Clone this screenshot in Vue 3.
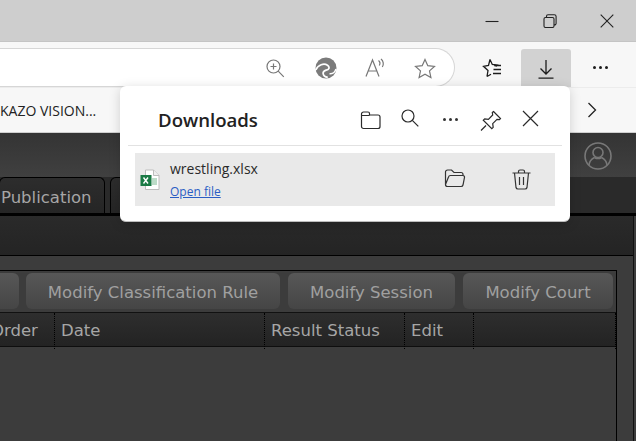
<template>
  <div class="screen">
    <!-- window title bar -->
    <div class="titlebar">
      <svg class="win-icon" width="14" height="14" viewBox="0 0 14 14"><path d="M0.5 7.5h13" /></svg>
      <svg class="win-icon restore" width="14" height="14" viewBox="0 0 14 14"><path d="M1 5a1.500 1.500 0 0 1 1.500-1.500h7A1.500 1.500 0 0 1 11 5v7a1.500 1.500 0 0 1-1.500 1.500h-7A1.500 1.500 0 0 1 1 12zM3.500 3.500V2.200A1.500 1.500 0 0 1 5 .7h6.300a1.800 1.800 0 0 1 1.800 1.800v7a1.500 1.500 0 0 1-1.600 1.400" /></svg>
      <svg class="win-icon" width="14" height="14" viewBox="0 0 14 14"><path d="M.7.7l12.600 12.600M13.300.7L.7 13.300" /></svg>
    </div>

    <!-- address bar row -->
    <div class="toolbar">
      <div class="address">
        <svg class="addr-icon zoom" width="20" height="20" viewBox="0 0 20 20"><circle cx="8.500" cy="8.500" r="6.500" /><path d="M8.500 5.500v6M5.500 8.500h6M13.200 13.200l5.600 5.600" /></svg>
        <svg class="edge" width="22" height="22" viewBox="0 0 22 22"><circle cx="11" cy="11" r="10.500" fill="#7b7b7b" /><path d="M0.800 13C3 7.500 9 6 12.500 8.200c1.800 1.200 2 3 .8 4-2 1.400-5.500 1-5.200 4.200 .2 2 2 3.600 4.700 4" fill="none" stroke="#fff" stroke-width="1.700" /><path d="M21 12c-1 3.500-4 5-6.500 4.700" fill="none" stroke="#fff" stroke-width="1.500" /></svg>
        <svg class="addr-icon" width="22" height="20" viewBox="0 0 22 20"><path d="M1 18.500L7.500 2l6.500 16.500M3.200 13h8.600M13.500 2.500c1.500 1.200 1.800 3.200.8 5M16 1c2.500 2 3 5.500 1.300 8" /></svg>
        <svg class="addr-icon star" width="22" height="21" viewBox="0 0 22 21"><path d="M11 1.500l2.800 6.200 6.700.7-5 4.500 1.400 6.600L11 16.200l-5.900 3.300 1.400-6.600-5-4.500 6.700-.7z" /></svg>
      </div>
      <svg class="tool-icon fav" width="22" height="20" viewBox="0 0 22 20"><path d="M10 1.500l2.300 5 5 .6-1.600 1.500M7 18.500l1-6-4.500-4.200 5-.9L10 1.500M7 18.500l4-2.300M14 7.500h7M13.500 11.500h7.500M13 15.500h8" /></svg>
      <div class="download-btn">
        <svg class="tool-icon" width="16" height="20" viewBox="0 0 16 20"><path d="M8 1v14M2.500 9.500L8 15l5.500-5.500M.5 19.200h15" /></svg>
      </div>
      <div class="more"><i></i><i></i><i></i></div>
    </div>

    <!-- favorites bar -->
    <div class="favbar">
      <span class="fav-item">KAZO VISION...</span>
      <svg class="chevron" width="10" height="16" viewBox="0 0 10 16"><path d="M1.500 1l7 7-7 7" /></svg>
    </div>

    <!-- page -->
    <div class="page">
      <div class="page-header">
        <svg class="avatar" width="28" height="28" viewBox="0 0 28 28"><circle cx="14" cy="14" r="13" /><circle cx="14" cy="10.500" r="5" /><path d="M5 23c.5-5 3.500-6.500 5.500-7.500M23 23c-.5-5-3.500-6.500-5.500-7.500M10.500 15.500c2 1.200 5 1.200 7 0" /></svg>
      </div>
      <div class="tabs">
        <div class="tab first">Publication</div>
        <div class="tab rest"></div>
      </div>
      <div class="tab-body">
        <div class="panel">
          <div class="panel-inner">
            <div class="actions">
              <button class="btn stub"></button>
              <button class="btn w-rule">Modify Classification Rule</button>
              <button class="btn w-session">Modify Session</button>
              <button class="btn w-court">Modify Court</button>
            </div>
            <div class="thead">
              <div class="th">Order</div>
              <div class="th">Date</div>
              <div class="th">Result Status</div>
              <div class="th">Edit</div>
              <div class="th"></div>
            </div>
          </div>
        </div>
      </div>
    </div>

    <!-- downloads flyout -->
    <div class="flyout">
      <div class="fly-head">
        <span class="fly-title">Downloads</span>
        <svg class="fly-icon" style="left:240px" width="22" height="20" viewBox="0 0 22 20"><path d="M1.500 16.500V4a2 2 0 0 1 2-2h4.500a1.500 1.500 0 0 1 1.500 1.500V5h8.500a2 2 0 0 1 2 2v9.500a2 2 0 0 1-2 2h-14.500a2 2 0 0 1-2-2zM1.500 5.500h8" /></svg>
        <svg class="fly-icon search" style="left:281px" width="18" height="18" viewBox="0 0 18 18"><circle cx="7" cy="7" r="6" /><path d="M11.300 11.300l6 6" /></svg>
        <div class="more small"><i></i><i></i><i></i></div>
        <svg class="fly-icon" style="left:360px" width="22" height="22" viewBox="0 0 22 22"><path d="M13.500 1.500l7 7-1 1.200-2.500-.4-4.300 4.300.5 3.700-1.400 1.400-8.500-8.500 1.400-1.400 3.700.5 4.300-4.300-.4-2.500zM6 15.500l-5 5" /></svg>
        <svg class="fly-icon" style="left:402px" width="17" height="17" viewBox="0 0 17 17"><path d="M1 1l15 15M16 1L1 16" /></svg>
      </div>
      <div class="fly-row">
        <svg class="xls" width="20" height="22" viewBox="0 0 20 22">
          <path d="M5.500 1h8l5.500 5.500V20.500H5.500z" fill="#fff" stroke="#bdbdbd" />
          <path d="M13.500 1v5.500H19" fill="#eee" stroke="#bdbdbd" />
          <path d="M12 9h5v7h-5z" fill="#bcdcc8" />
          <rect x="0.500" y="6" width="11" height="11" fill="#1a7a45" />
          <path d="M3.500 8.500l4.500 6M8 8.500l-4.500 6" stroke="#fff" stroke-width="1.400" />
        </svg>
        <div class="file">
          <div class="file-name">wrestling.xlsx</div>
          <a class="file-link">Open file</a>
        </div>
        <svg class="row-icon" style="left:309px" width="22" height="19" viewBox="0 0 22 19"><path d="M1.500 15.500V3a2 2 0 0 1 2-2h4l2.500 2.500h7a2 2 0 0 1 2 2V6.500M1.500 15.500a2 2 0 0 0 2 2h13.500a2 2 0 0 0 2-1.500l1.500-7.500a1.600 1.600 0 0 0-1.600-2H6.500a2 2 0 0 0-2 1.500z" /></svg>
        <svg class="row-icon" style="left:377px" width="19" height="21" viewBox="0 0 19 21"><path d="M.5 4h18M2.500 4l1.500 14.500a2 2 0 0 0 2 1.500h7a2 2 0 0 0 2-1.500L16.500 4M6.500 4V2.500A1.500 1.500 0 0 1 8 1h3a1.500 1.500 0 0 1 1.500 1.500V4M7.500 8v8M11.500 8v8" /></svg>
      </div>
    </div>
  </div>
</template>

<script setup>
</script>

<style>
html, body { margin: 0; background: #3c3c3c; overflow: hidden; }
</style>

<style scoped>
.screen {
  position: relative;
  width: 636px;
  height: 441px;
  overflow: hidden;
  font-family: "DejaVu Sans", sans-serif;
}
svg { display: block; fill: none; }

.titlebar {
  height: 41px;
  background: #cecece;
  border-bottom: 1px solid #c4c4c4;
  display: flex;
  align-items: center;
  justify-content: flex-end;
  gap: 44px;
  padding-right: 22px;
}
.win-icon path { stroke: #222; stroke-width: 1.100; }
.restore { margin-right: -1px; }

.toolbar {
  height: 45px;
  background: #f7f7f7;
  display: flex;
  align-items: flex-end;
  position: relative;
}
.address {
  width: 455px;
  height: 39px;
  box-sizing: border-box;
  background: #fff;
  border: 1px solid #d6d6d6;
  border-left: none;
  border-radius: 0 20px 20px 0;
  display: flex;
  align-items: center;
  justify-content: flex-end;
  gap: 28px;
  padding: 1px 19px 0 0;
}
.addr-icon path, .addr-icon circle { stroke: #777; stroke-width: 1.200; }
.zoom { margin-right: 2px; }
.star { margin-left: -1px; margin-right: -1px; }
.tool-icon path { stroke: #1c1c1c; stroke-width: 1.300; }
.fav { margin: 0 19px 9px 25px; }
.download-btn {
  width: 50px;
  height: 38px;
  background: #d2d2d2;
  border-radius: 3px 3px 0 0;
  display: flex;
  justify-content: center;
  align-items: flex-start;
  padding-top: 10px;
  box-sizing: border-box;
}
.more {
  display: flex;
  gap: 3px;
  margin: 0 0 18px 22px;
}
.more i {
  width: 3px;
  height: 3px;
  border-radius: 50%;
  background: #1c1c1c;
}
.more.small {
  position: absolute;
  left: 323px;
  top: 32px;
  margin: 0;
}
.more.small i { background: #333; }

.favbar {
  height: 44px;
  background: #f7f7f7;
  border-top: 1px solid #ececec;
  border-bottom: 1px solid #cfcfcf;
  display: flex;
  align-items: center;
  justify-content: space-between;
  padding-right: 39px;
}
.fav-item {
  font-family: "Open Sans", sans-serif;
  font-size: 14px;
  color: #222;
  white-space: nowrap;
}
.chevron path { stroke: #222; stroke-width: 1.300; }

.page { background: #3c3c3c; }
.page-header {
  height: 44px;
  box-sizing: border-box;
  padding: 1px 24px 0 0;
  background: linear-gradient(#343434, #404040);
  display: flex;
  align-items: center;
  justify-content: flex-end;
}
.avatar circle, .avatar path { stroke: #787878; stroke-width: 1.600; }

.tabs {
  height: 39px;
  box-sizing: border-box;
  background: #2a2a2a;
  border-bottom: 3px solid #000;
  display: flex;
  gap: 5px;
  align-items: stretch;
}
.tab {
  border: 1px solid #000;
  border-bottom: none;
  border-radius: 6px 6px 0 0;
  background: linear-gradient(#2d2d2d, #252525);
  color: #a6a6a6;
  font-size: 16.500px;
  line-height: 40px;
}
.tab.first { width: 106px; margin-left: -1px; padding-left: 1px; box-sizing: border-box; }
.tab.rest { width: 200px; }

.tab-body {
  padding-top: 39px;
  margin-right: 2px;
  border-right: 1px solid #111;
  background: linear-gradient(#2a2a2a, #242424 39px);
}
.panel {
  background: #3c3c3c;
  border-top: 1px solid #000;
  padding: 14px 16px 0 0;
  height: 186px;
  box-sizing: border-box;
}
.panel-inner {
  border-top: 1px solid #000;
  border-right: 1px solid #000;
  min-height: 171px;
  box-sizing: border-box;
}
.actions {
  display: flex;
  gap: 8px;
  padding: 2px 3px 3px 0;
  justify-content: flex-end;
  border-bottom: 1px solid #111;
}
.btn {
  flex-shrink: 0;
  height: 36px;
  border: none;
  border-radius: 6px;
  background: linear-gradient(#575757, #454545);
  color: #a0a0a0;
  font-family: "DejaVu Sans", sans-serif;
  font-size: 16.500px;
  padding: 2px 0 0;
  text-align: center;
}
.stub { width: 19px; margin-right: -1px; border-radius: 0 6px 6px 0; }
.w-rule { width: 254px; }
.w-session { width: 167px; }
.w-court { width: 150px; }

.thead {
  display: grid;
  grid-template-columns: 55px 210px 140px 69px 1fr;
  height: 34px;
  background: linear-gradient(#2e2e2e, #232323);
  border-bottom: 1px solid #0e0e0e;
  box-sizing: border-box;
}
.th {
  border-right: 1px dotted #000;
  color: #a6a6a6;
  font-size: 16.500px;
  line-height: 36px;
  padding-left: 6px;
  white-space: nowrap;
}
.th:first-child {
  padding-left: 0;
  text-indent: -9px;
}

.flyout {
  position: absolute;
  left: 120px;
  top: 86px;
  width: 450px;
  height: 136px;
  box-sizing: border-box;
  background: #fff;
  border-radius: 6px;
  border-bottom: 1px solid #bdbdbd;
  box-shadow: 0 2px 12px rgba(0, 0, 0, 0.16);
  color: #1c1c1c;
  font-family: "Open Sans", sans-serif;
}
.fly-head {
  height: 59px;
  margin: 0 8px;
  border-bottom: 1px solid #e2e2e2;
}
.fly-title {
  position: absolute;
  left: 38px;
  top: 21px;
  font-size: 18.600px;
  font-weight: 600;
  line-height: 26px;
  color: #222;
}
.fly-icon { position: absolute; top: 24px; }
.fly-icon.search { top: 23px; }
.fly-icon path, .fly-icon circle { stroke: #2a2a2a; stroke-width: 1.200; }
.fly-row {
  margin: 7px 15px 0;
  height: 53px;
  background: #e9e9e9;
  display: flex;
  align-items: center;
  position: relative;
}
.xls { margin-left: 5px; }
.file { margin-left: 10px; padding-top: 2px; }
.file-name {
  font-size: 14px;
  line-height: 20px;
  color: #2a2a2a;
  margin-top: -2px;
}
.file-link {
  display: block;
  font-size: 12px;
  line-height: 18px;
  margin-top: 4px;
  color: #2a5dc4;
  text-decoration: underline;
}
.row-icon { position: absolute; top: 16px; }
.row-icon path { stroke: #333; stroke-width: 1.200; }
</style>
